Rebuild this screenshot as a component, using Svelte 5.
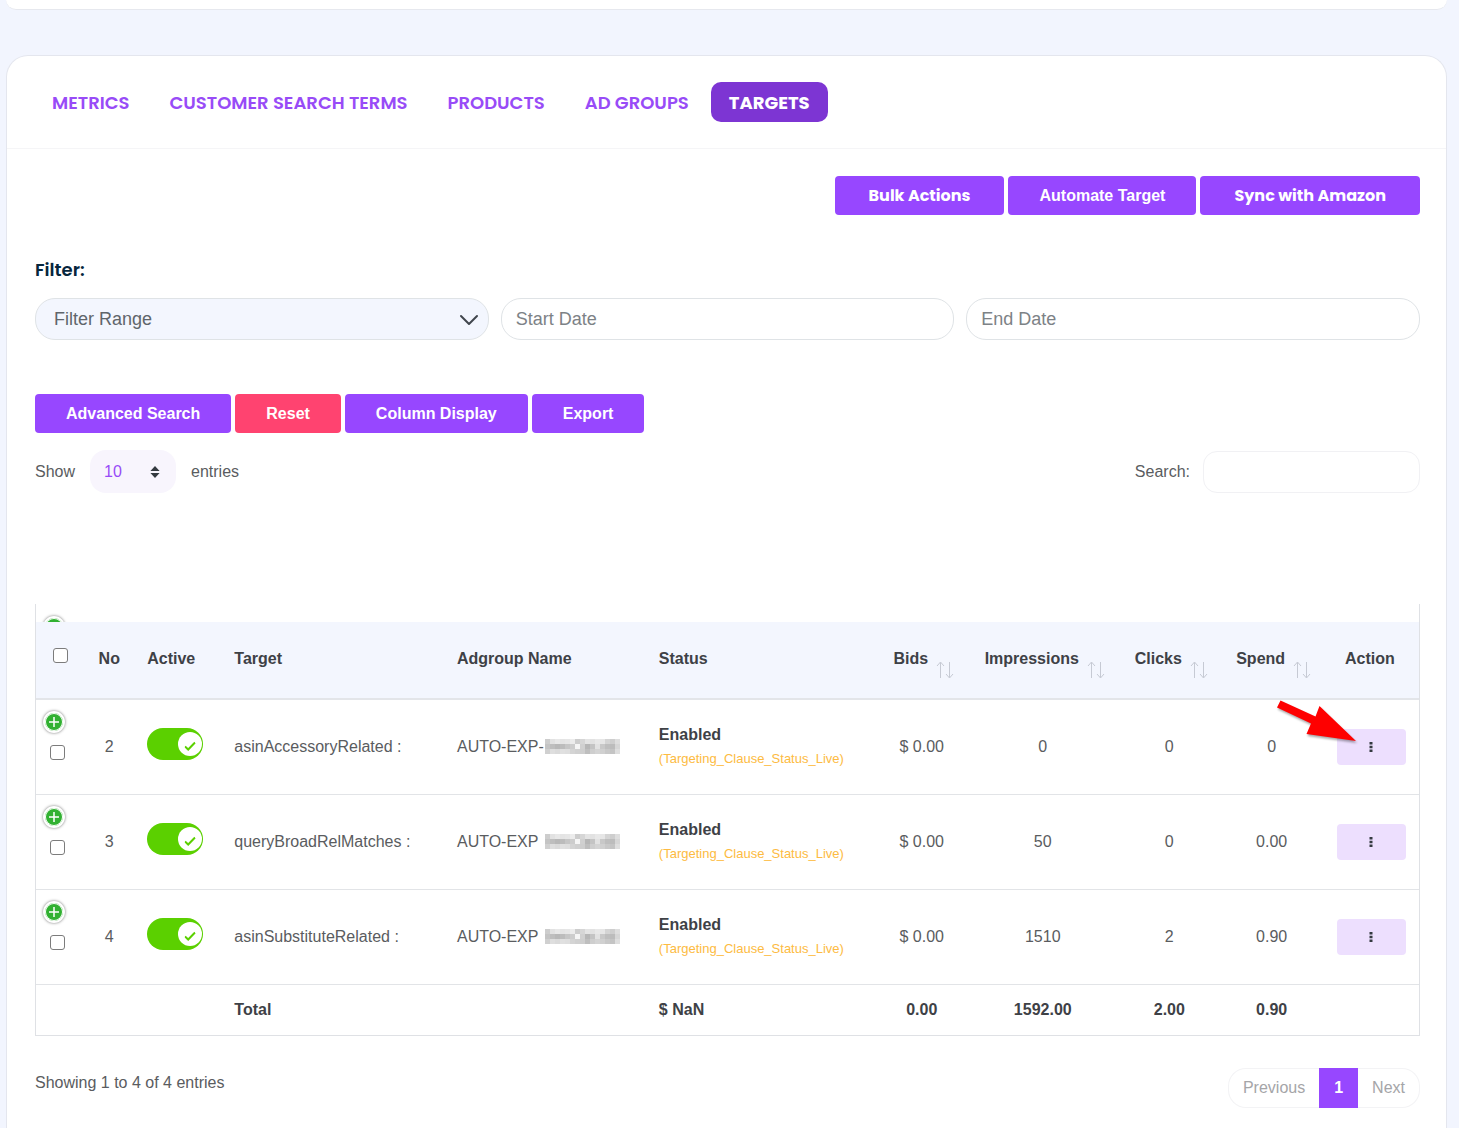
<script lang="ts">
	const tabs = ['Metrics', 'Customer Search Terms', 'Products', 'Ad Groups', 'Targets'];
	let activeTab = $state('Targets');

	let rows = $state([
		{ no: 2, active: true, target: 'asinAccessoryRelated', prefix: 'AUTO-EXP-', bid: '0.00', impressions: '0', clicks: '0', spend: '0' },
		{ no: 3, active: true, target: 'queryBroadRelMatches', prefix: 'AUTO-EXP', bid: '0.00', impressions: '50', clicks: '0', spend: '0.00' },
		{ no: 4, active: true, target: 'asinSubstituteRelated', prefix: 'AUTO-EXP', bid: '0.00', impressions: '1510', clicks: '2', spend: '0.90' }
	]);

	const sortable = ['Bids', 'Impressions', 'Clicks', 'Spend'];

	// Grey levels of the masked ad group name, one row of blocks per line
	const mask = [
		[205, 226, 232, 228, 230, 236, 205, 214, 228, 226, 232, 230, 212, 206, 222],
		[196, 190, 184, 188, 198, 205, 246, 208, 182, 196, 226, 200, 190, 188, 214],
		[208, 222, 218, 224, 222, 212, 208, 206, 190, 206, 212, 208, 200, 196, 222]
	];
</script>

<svelte:head>
	<title>Targets</title>
</svelte:head>

<div class="page">
	<div class="previous-card"></div>

	<main class="card">
		<nav class="tabs">
			{#each tabs as tab}
				<button class="tab" class:active={tab === activeTab} onclick={() => (activeTab = tab)}>{tab}</button>
			{/each}
		</nav>

		<section class="content">
			<div class="actions top-actions">
				<button class="btn brand">Bulk Actions</button>
				<button class="btn">Automate Target</button>
				<button class="btn brand">Sync with Amazon</button>
			</div>

			<!-- Filters -->
			<h2 class="filter-title">Filter:</h2>
			<div class="filters">
				<div class="select-wrap">
					<select class="field range" aria-label="Filter Range">
						<option>Filter Range</option>
					</select>
					<svg class="chevron" width="20" height="12" viewBox="0 0 20 12" aria-hidden="true">
						<path d="M2 2l8 8 8-8" fill="none" stroke="#40464d" stroke-width="2" stroke-linecap="round" stroke-linejoin="round" />
					</svg>
				</div>
				<input class="field" type="text" placeholder="Start Date" aria-label="Start Date" />
				<input class="field" type="text" placeholder="End Date" aria-label="End Date" />
			</div>

			<div class="actions">
				<button class="btn">Advanced Search</button>
				<button class="btn danger">Reset</button>
				<button class="btn">Column Display</button>
				<button class="btn">Export</button>
			</div>

			<div class="table-tools">
				<label class="length">
					Show
					<span class="length-wrap">
						<select class="length-select">
							<option>10</option>
							<option>25</option>
							<option>50</option>
						</select>
						<svg class="updown" width="10" height="12" viewBox="0 0 10 12" aria-hidden="true">
							<path d="M5 0l4.600 5H.4zM5 12L.4 7h9.200z" fill="#343a40" />
						</svg>
					</span>
					entries
				</label>
				<label class="search">
					Search:
					<input type="search" />
				</label>
			</div>

			<div class="table-frame">
				<div class="hidden-row">
					{@render expand('Expand row 1')}
				</div>
				<table>
					<colgroup>
						<col class="c-check" />
						<col class="c-no" />
						<col class="c-active" />
						<col class="c-target" />
						<col class="c-group" />
						<col class="c-status" />
						<col class="c-bids" />
						<col class="c-impr" />
						<col class="c-clicks" />
						<col class="c-spend" />
						<col class="c-action" />
					</colgroup>
					<thead>
						<tr>
							<th class="center"><input class="check head-check" type="checkbox" aria-label="Select all" /></th>
							<th class="center">No</th>
							<th>Active</th>
							<th>Target</th>
							<th>Adgroup Name</th>
							<th>Status</th>
							{#each sortable as name}
								<th class="center">
									<button class="sort">
										{name}
										<svg width="18" height="18" viewBox="0 0 18 18" aria-hidden="true">
											<path d="M4.500 17V1.500M1 5l3.500-4L8 5M13.500 1v15.500M10 13l3.500 4 3.500-4" fill="none" stroke="#c6cad4" />
										</svg>
									</button>
								</th>
							{/each}
							<th class="center">Action</th>
						</tr>
					</thead>
					<tbody>
						{#each rows as row, i}
							<tr>
								<td class="select-cell">
									<div class="select-stack">
										{@render expand(`Expand row ${row.no}`)}
										<input class="check" type="checkbox" aria-label={`Select row ${row.no}`} />
									</div>
								</td>
								<td class="center">{row.no}</td>
								<td>
									<label class="toggle">
										<input type="checkbox" bind:checked={row.active} aria-label={`Row ${row.no} active`} />
										<span class="knob">
											<svg width="12" height="10" viewBox="0 0 12 10" aria-hidden="true">
												<path d="M1 5.500l3.200 3L11 1.500" fill="none" stroke="#5bd000" stroke-width="2" />
											</svg>
										</span>
									</label>
								</td>
								<td>{row.target} :</td>
								<td>
									<div class="group-name">
										<span class="prefix">{row.prefix}</span>
										<svg class="mask" width="75" height="15" viewBox="0 0 75 15" shape-rendering="crispEdges" aria-hidden="true">
											{#each mask as line, y}
												{#each line as level, x}
													<rect x={x * 5} y={y * 5} width="5" height="5" fill={`rgb(${level}, ${level}, ${level})`} />
												{/each}
											{/each}
										</svg>
									</div>
								</td>
								<td>
									<strong class="status">Enabled</strong>
									<span class="status-note">(Targeting_Clause_Status_Live)</span>
								</td>
								<td class="center">$ {row.bid}</td>
								<td class="center">{row.impressions}</td>
								<td class="center">{row.clicks}</td>
								<td class="center">{row.spend}</td>
								<td class="action-cell">
									<button class="more" aria-label={`Actions for row ${row.no}`}>
										<svg width="4" height="12" viewBox="0 0 4 12" aria-hidden="true">
											<path d="M.5 1h3v2.500h-3zM.5 4.800h3v2.500h-3zM.5 8.600h3v2.500h-3z" fill="#343a40" />
										</svg>
									</button>
									{#if i === 0}
										<svg class="pointer" width="84" height="46" viewBox="0 0 84 46" aria-hidden="true">
											<path d="M5.500 2.500L40.500 18.500 44.500 8 81 43 31.500 36 36 25.500 2 9.500z" fill="#fe0000" />
										</svg>
									{/if}
								</td>
							</tr>
						{/each}
					</tbody>
					<tfoot>
						<tr>
							<td></td>
							<td></td>
							<td></td>
							<td>Total</td>
							<td></td>
							<td>$ NaN</td>
							<td class="center">0.00</td>
							<td class="center">1592.00</td>
							<td class="center">2.00</td>
							<td class="center">0.90</td>
							<td></td>
						</tr>
					</tfoot>
				</table>
			</div>

			<div class="table-footer">
				<p>Showing 1 to 4 of 4 entries</p>
				<div class="pagination">
					<button class="page-btn" disabled>Previous</button>
					<button class="page-btn current">1</button>
					<button class="page-btn" disabled>Next</button>
				</div>
			</div>
		</section>
	</main>
</div>

{#snippet expand(label: string)}
	<button class="expand" aria-label={label}>
		<svg width="10" height="10" viewBox="0 0 10 10" aria-hidden="true">
			<path d="M5 0v10M0 5h10" stroke="#fff" stroke-width="1.500" />
		</svg>
	</button>
{/snippet}

<style>
	:global(body) {
		background: #fff;
	}

	.page {
		box-sizing: border-box;
		padding: 0 12px 0 6px;
		background: #f2f5fe;
		font-family: 'Liberation Sans', Arial, sans-serif;
		font-size: 16px;
		color: #5a5c60;
	}

	.page *,
	.page *::before {
		box-sizing: border-box;
	}

	button,
	input,
	select {
		font: inherit;
		margin: 0;
	}

	button {
		cursor: pointer;
	}

	/* Cards */
	.previous-card {
		height: 10px;
		margin-bottom: 45px;
		background: #fff;
		border-bottom: 1px solid #e6e8ee;
		border-radius: 0 0 20px 20px;
	}

	.card {
		background: #fff;
		border: 1px solid #e4e6ee;
		border-bottom: 0;
		border-radius: 22px 22px 0 0;
	}

	.tabs {
		display: flex;
		gap: 4px;
		padding: 26px 27px;
		border-bottom: 1px solid #f5f5f7;
	}

	.tab {
		height: 40px;
		padding: 0 18px;
		border: 0;
		border-radius: 10px;
		background: none;
		font-family: Poppins, Inter, sans-serif;
		font-size: 18px;
		font-weight: 600;
		text-transform: uppercase;
		color: #984bf7;
	}

	.tab.active {
		background: #7d35d3;
		font-weight: 700;
		color: #fff;
	}

	.content {
		padding: 27px 26px 20px 28px;
	}

	/* Buttons */
	.actions {
		display: flex;
		gap: 4px;
	}

	.top-actions {
		justify-content: flex-end;
	}

	.btn {
		height: 39px;
		padding: 0 31px;
		border: 0;
		border-radius: 4px;
		background: #9747ff;
		font-weight: 700;
		color: #fff;
	}

	.btn.brand {
		padding: 0 34px;
		font-family: Poppins, Inter, sans-serif;
	}

	.btn.danger {
		background: #ff4370;
	}

	/* Filters */
	.filter-title {
		margin: 43px 0 16px;
		font-family: Poppins, Inter, sans-serif;
		font-size: 18px;
		line-height: 24px;
		font-weight: 600;
		color: #06263d;
	}

	.filters {
		display: grid;
		grid-template-columns: repeat(3, 1fr);
		gap: 12px;
		margin-bottom: 54px;
	}

	.field {
		width: 100%;
		height: 42px;
		padding: 0 14px;
		border: 1px solid #dfe3e6;
		border-radius: 20px;
		background: #fff;
		font-size: 18px;
		color: #5f656b;
	}

	.field::placeholder {
		color: #7d8286;
		opacity: 1;
	}

	.select-wrap,
	.length-wrap {
		position: relative;
	}

	.range {
		appearance: none;
		padding: 0 18px;
		background: #f3f6fe;
	}

	.chevron {
		position: absolute;
		top: 16px;
		right: 10px;
		pointer-events: none;
	}

	/* Length and search */
	.table-tools {
		display: flex;
		justify-content: space-between;
		margin: 17px 0 111px;
	}

	.length,
	.search {
		display: flex;
		align-items: center;
	}

	.length {
		gap: 15px;
	}

	.search {
		gap: 13px;
	}

	.length-select {
		appearance: none;
		width: 86px;
		height: 43px;
		padding: 0 14px;
		border: 0;
		border-radius: 16px;
		background: #f8f5fd;
		color: #984bf7;
	}

	.updown {
		position: absolute;
		top: 16px;
		right: 16px;
		pointer-events: none;
	}

	.search input {
		width: 217px;
		height: 42px;
		padding: 0 14px;
		border: 1px solid #f1f1f4;
		border-radius: 14px;
		background: #fff;
	}

	/* Table */
	.table-frame {
		border: 1px solid #dfe1e5;
		border-top: 0;
	}

	.hidden-row {
		height: 18px;
		padding: 12px 7px 0;
		overflow: hidden;
	}

	table {
		width: 100%;
		table-layout: fixed;
		border-collapse: collapse;
	}

	.c-check {
		width: 3.5%;
	}

	.c-no {
		width: 3.6%;
	}

	.c-active {
		width: 6.3%;
	}

	.c-target {
		width: 16.1%;
	}

	.c-group {
		width: 14.6%;
	}

	.c-status {
		width: 16.5%;
	}

	.c-bids {
		width: 6.9%;
	}

	.c-impr {
		width: 10.6%;
	}

	.c-clicks {
		width: 7.7%;
	}

	.c-spend {
		width: 7.1%;
	}

	.c-action {
		width: 7.1%;
	}

	th {
		height: 77px;
		padding: 0 0 3px 13px;
		background: #f3f6fe;
		border-bottom: 2px solid #e3e5e9;
		font-weight: 700;
		text-align: left;
		white-space: nowrap;
		color: #3e4146;
	}

	td {
		height: 95px;
		padding: 0 0 0 13px;
		border-bottom: 1px solid #e2e4e7;
		white-space: nowrap;
	}

	th.center {
		padding: 0 0 3px;
		text-align: center;
	}

	td.center {
		padding: 0;
		text-align: center;
	}

	tfoot td {
		height: 51px;
		border-bottom: 0;
		font-weight: 700;
		color: #3e4146;
	}

	.sort {
		display: inline-flex;
		align-items: center;
		gap: 8px;
		padding: 0 0 0 4px;
		border: 0;
		background: none;
		color: inherit;
	}

	.sort svg {
		margin-top: 22px;
	}

	.check {
		appearance: none;
		display: block;
		width: 15px;
		height: 15px;
		border: 1px solid #7c7c7c;
		border-radius: 3px;
		background: #fff;
	}

	.head-check {
		margin: 0 auto 6px;
	}

	.check:checked {
		background: #9747ff;
	}

	td.select-cell {
		padding: 11px 7px 0;
		vertical-align: top;
	}

	.select-stack {
		display: flex;
		flex-direction: column;
		align-items: flex-start;
		gap: 12px;
	}

	.select-stack .check {
		margin-left: 7px;
	}

	.expand {
		display: flex;
		align-items: center;
		justify-content: center;
		width: 22px;
		height: 22px;
		padding: 0;
		border: 2px solid #fff;
		border-radius: 50%;
		background: #31b131;
		box-shadow: inset 0 0 0 1px #fff, 0 0 3px #777;
	}

	.toggle {
		display: flex;
		width: 56px;
		height: 32px;
		margin-bottom: 6px;
		cursor: pointer;
	}

	.toggle input {
		position: absolute;
		opacity: 0;
	}

	.knob {
		display: flex;
		width: 100%;
		padding: 4px 1px;
		border-radius: 16px;
		background: #ccc;
	}

	.knob svg {
		width: 24px;
		height: 24px;
		padding: 8px 6px 4px;
		border-radius: 50%;
		background: #fff;
	}

	.toggle input:checked + .knob {
		justify-content: flex-end;
		background: #5bd000;
	}

	.group-name {
		display: flex;
		align-items: center;
	}

	.prefix {
		min-width: 88px;
	}

	.status,
	.status-note {
		display: block;
	}

	.status {
		line-height: 24px;
		color: #3e4146;
	}

	.status-note {
		font-size: 13px;
		line-height: 24px;
		color: #fdbb42;
	}

	.action-cell {
		position: relative;
		padding: 0 13px 0 16px;
	}

	.more {
		display: flex;
		align-items: center;
		justify-content: center;
		width: 100%;
		height: 36px;
		border: 0;
		border-radius: 4px;
		background: #eddffe;
	}

	.pointer {
		position: absolute;
		top: -2px;
		right: 60px;
		filter: drop-shadow(1px 2px 1px rgba(0, 0, 0, 0.35));
		pointer-events: none;
	}

	/* Footer */
	.table-footer {
		display: flex;
		justify-content: space-between;
		margin-top: 32px;
	}

	.table-footer p {
		margin: 0;
		line-height: 30px;
	}

	.pagination {
		display: flex;
	}

	.page-btn {
		height: 40px;
		padding: 0 14px;
		border: 1px solid #f3f3f5;
		background: #fff;
		color: #a5a5a8;
	}

	.page-btn:first-child {
		border-right: 0;
		border-radius: 18px 0 0 18px;
	}

	.page-btn:last-child {
		border-left: 0;
		border-radius: 0 18px 18px 0;
	}

	.page-btn.current {
		border-color: #9747ff;
		background: #9747ff;
		font-weight: 700;
		color: #fff;
	}
</style>
